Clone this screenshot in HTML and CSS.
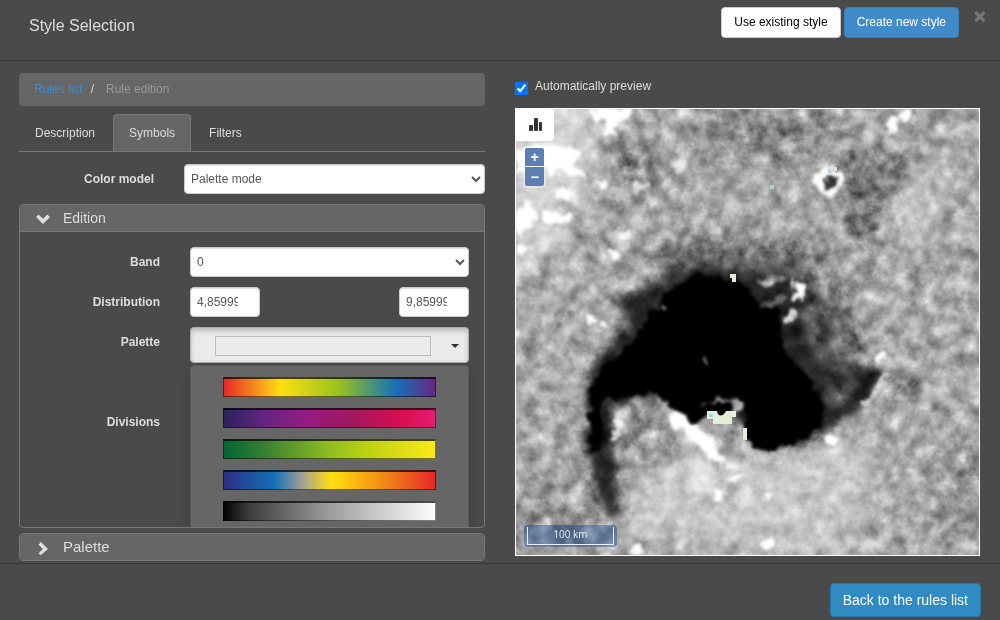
FILE: index.html
```html
<!DOCTYPE html>
<html lang="en">
<head>
<meta charset="utf-8">
<title>Style Selection</title>
<link rel="stylesheet" href="styles.css">
</head>
<body>
<div class="dialog">
  <header class="dialog-header">
    <h1 class="dialog-title">Style Selection</h1>
    <div class="header-actions">
      <button type="button" class="btn btn-light">Use existing style</button>
      <button type="button" class="btn btn-primary">Create new style</button>
    </div>
    <button type="button" class="close" aria-label="Close">×</button>
  </header>

  <main class="dialog-body">
    <section class="editor">
      <nav class="breadcrumb">
        <a href="#rules">Rules list</a><span class="separator">/</span><span class="current">Rule edition</span>
      </nav>
      <div class="tabs">
        <a href="#description" class="tab">Description</a>
        <a href="#symbols" class="tab tab-active">Symbols</a>
        <a href="#filters" class="tab">Filters</a>
      </div>
      <div class="form-row model-row">
        <label for="model">Color model</label>
        <select id="model" class="control"><option>Palette mode</option></select>
      </div>

      <section class="panel panel-open">
        <button type="button" class="panel-heading">
          <svg class="chevron" viewBox="0 0 16 16"><path d="M1 7 3.500 4.500 8 8.700 12.500 4.500 15 7 8 14z"/></svg>
          <span>Edition</span>
        </button>
        <div class="panel-body">
          <div class="form-row">
            <label for="band">Band</label>
            <select id="band" class="control"><option>0</option></select>
          </div>
          <div class="form-row">
            <label for="min">Distribution</label>
            <div class="range">
              <input id="min" class="control number" value="4,8599999">
              <input class="control number" aria-label="Distribution maximum" value="9,8599999">
            </div>
          </div>
          <div class="form-row palette-row">
            <label for="palette">Palette</label>
            <div class="dropdown">
              <button type="button" id="palette" class="dropdown-toggle">
                <span class="swatch swatch-empty"></span><span class="caret"></span>
              </button>
              <div class="dropdown-menu">
                <button type="button" class="swatch rainbow" aria-label="Rainbow"></button>
                <button type="button" class="swatch magenta" aria-label="Magenta"></button>
                <button type="button" class="swatch green" aria-label="Green to yellow"></button>
                <button type="button" class="swatch heat" aria-label="Blue to red"></button>
                <button type="button" class="swatch gray" aria-label="Gray"></button>
              </div>
            </div>
          </div>
          <div class="form-row divisions-row"><span class="row-label">Divisions</span></div>
        </div>
      </section>

      <section class="panel">
        <button type="button" class="panel-heading heading-large">
          <svg class="chevron" viewBox="0 0 16 16"><path d="M3.500 5.500 6 3 13 10 6 16 3.500 14.500 7.800 10z"/></svg>
          <span>Palette</span>
        </button>
      </section>
    </section>

    <section class="preview">
      <label class="check"><input type="checkbox" checked><span>Automatically preview</span></label>
      <div class="map">
        <svg class="terrain" viewBox="516 109 463 446" preserveAspectRatio="xMidYMid slice" role="img" aria-label="Terrain preview">
          <defs>
            <filter id="grain" x="0" y="0" width="100%" height="100%" color-interpolation-filters="sRGB">
              <feTurbulence type="fractalNoise" baseFrequency="0.065" numOctaves="4" seed="21"/>
              <feColorMatrix values="0.700 0.500 0 0 -0.080  0.700 0.500 0 0 -0.080  0.700 0.500 0 0 -0.080  0 0 0 0 1"/>
            </filter>
            <filter id="rough" x="-20%" y="-20%" width="140%" height="140%" color-interpolation-filters="sRGB">
              <feTurbulence type="fractalNoise" baseFrequency="0.09" numOctaves="3" seed="3" result="n"/>
              <feDisplacementMap in="SourceGraphic" in2="n" scale="14" xChannelSelector="R" yChannelSelector="G"/>
              <feGaussianBlur stdDeviation="1.500"/>
            </filter>
            <filter id="soft" x="-30%" y="-30%" width="160%" height="160%"><feGaussianBlur stdDeviation="12"/></filter>
            <filter id="mid" x="-30%" y="-30%" width="160%" height="160%" color-interpolation-filters="sRGB">
              <feTurbulence type="fractalNoise" baseFrequency="0.070" numOctaves="3" seed="5" result="n"/>
              <feDisplacementMap in="SourceGraphic" in2="n" scale="14" xChannelSelector="R" yChannelSelector="G"/>
              <feGaussianBlur stdDeviation="5"/>
            </filter>
          </defs>
          <rect x="516" y="109" width="463" height="446" fill="#a6a6a6"/>
          <g filter="url(#soft)">
            <path d="M500 90H600L590 170 560 250 500 280z" fill="#d2d2d2"/>
            <path d="M610 150 660 150 655 185 620 190z" fill="#7a7a7a"/>
            <path d="M690 110H860L810 160 700 155z" fill="#858585"/>
            <path d="M835 150 915 155 890 250 850 240z" fill="#707070"/>
            <path d="M890 190 960 160 920 240 885 235z" fill="#c2c2c2"/>
            <path d="M665 240 810 245 850 310 868 370 760 330 650 290z" fill="#606060"/>
            <path d="M510 480 580 470 600 555H510z" fill="#979797"/>
            <path d="M620 540 650 460 740 455 880 440 850 555z" fill="#c6c6c6"/>
            <path d="M940 440H985V540H930z" fill="#929292"/>
          </g>
          <g filter="url(#mid)">
            <path d="M614 298 640 290 672 276 700 266 790 276 815 310 826 350 888 374 862 410 800 447 770 450 740 420 650 405 612 405 620 515 604 520 585 450 588 375 606 345 632 325z" fill="#222"/>
            <path d="M800 300 830 305 845 350 858 372 840 375 810 355z" fill="#555"/>
            <path d="M830 382 856 386 840 408 826 405z" fill="#666"/>
            <path d="M885 399 924 374 914 389z" fill="#333"/>
            <path d="M622 402 650 397 690 440 660 465 622 465z" fill="#929292"/>
            <path d="M703 490 730 460 702 515z" fill="#505050"/>
            <path d="M650 389 676 400 725 462 700 462 668 425z" fill="#c0c0c0"/>
            <path d="M690 455 722 470 712 500 690 490z" fill="#ddd"/>
          </g>
          <g filter="url(#rough)">
            <path d="M665 293 695 274 742 280 762 307 780 307 785 353 808 375 824 408 823 426 792 445 766 452 744 440 744 402 720 398 696 425 650 391 603 400 600 455 590 455 589 388 605 365 625 349 650 317z" fill="#000"/>
            <path d="M669 412 680 414 715 439 724 462 712 461 696 444 672 422z" fill="#fff"/>
            <path d="M610 441 617 413 625 414 617 443z" fill="#ddd"/>
            <path d="M700 404 740 397 743 410 728 410z" fill="#a0a0a0"/>
            <path d="M704 403H730V412H705z" fill="#000"/>
            <path d="M756 281 780 274 788 277 765 288z" fill="#848484"/>
            <path d="M770 298 788 294 780 304 760 308z" fill="#777"/>
            <path d="M788 284 794 278 796 283 793 287z" fill="#ddd"/>
            <path d="M797 285 806 287 797 303 793 302z" fill="#fff"/>
            <path d="M792 308 797 314 793 325 785 323z" fill="#ddd"/>
            <path d="M728 477 746 472 736 482 727 485z" fill="#fff"/>
            <path d="M716 488 728 492 720 502 712 500z" fill="#fff"/>
            <path d="M862 406 886 370 890 373 873 402z" fill="#bdbdbd"/>
            <path d="M590 108H632L629 122 619 120 616 136 602 134 608 124 596 120z" fill="#fff"/>
            <path d="M516 150 550 143 560 148 580 149 583 158 574 164 586 178 567 170 552 175 540 164 516 176z" fill="#fff"/>
            <path d="M555 186 571 190 568 202 558 198z" fill="#fff"/>
            <path d="M524 198 533 202 536 218 516 239 516 223z" fill="#fff"/>
            <path d="M543 210 568 212 566 225 542 224 540 240z" fill="#fff"/>
            <path d="M516 245 532 246 522 255H516z" fill="#fff"/>
            <path d="M901 110 912 110 908 119 898 119z" fill="#fff"/>
            <path d="M888 119 898 117 895 134 886 132z" fill="#fff"/>
            <path d="M813 179 820 168 834 165 845 179 839 194 828 198 818 190z" fill="#fff"/>
            <path d="M824 178 838 176 835 188 824 188z" fill="#333"/>
            <path d="M921 196 929 185 926 197z" fill="#fff"/>
            <path d="M893 226 908 205 912 208 902 222z" fill="#ddd"/>
            <circle cx="832" cy="441" r="6" fill="#fff"/><circle cx="616" cy="254" r="5" fill="#fff"/>
            <circle cx="590" cy="320" r="5" fill="#fff"/><circle cx="880" cy="358" r="4" fill="#fff"/>
            <circle cx="766" cy="545" r="6" fill="#fff"/><circle cx="705" cy="362" r="3" fill="#666"/>
            <circle cx="662" cy="308" r="4" fill="#ddd"/><circle cx="606" cy="325" r="4" fill="#fff"/>
            <circle cx="600" cy="184" r="4" fill="#fff"/><circle cx="639" cy="188" r="6" fill="#ddd"/>
            <circle cx="680" cy="166" r="5" fill="#ddd"/><circle cx="646" cy="182" r="4" fill="#ddd"/>
            <circle cx="625" cy="235" r="5" fill="#eee"/><circle cx="637" cy="550" r="5" fill="#fff"/>
            <circle cx="704" cy="480" r="5" fill="#eee"/><circle cx="766" cy="495" r="4" fill="#fff"/>
          </g>
          <rect class="grain" x="516" y="109" width="463" height="446" filter="url(#grain)"/>
          <g fill="#e5eed8">
            <path d="M707 411H736V417H732V424H713V419H707z"/><path d="M743 428H747V440H743z"/>
            <path d="M730 274H736V282H732V278H730z"/>
          </g>
          <path d="M717 411C718 417 723 417 726 411z" fill="#000"/>
          <path d="M827 167H837V171H833V174H828z" fill="#d9e3df"/>
          <path d="M709 414H713V417H709zM770 187H774V189H770zM829 170H831V173H829z" fill="#a6d5dc"/>
          <path d="M770 185H774V187H770z" fill="#acd5a9"/>
        </svg>
        <div class="map-tools">
          <button type="button" class="chart-button" aria-label="Histogram">
            <svg viewBox="0 0 14 14"><rect x="0" y="7" width="4" height="6" rx="1"/><rect x="5" y="0" width="4" height="13" rx="1"/><rect x="10" y="4" width="3" height="9" rx="1"/></svg>
          </button>
          <div class="zoom">
            <button type="button" aria-label="Zoom in">+</button>
            <button type="button" aria-label="Zoom out">−</button>
          </div>
        </div>
        <div class="scale"><div class="scale-line">100 km</div></div>
      </div>
    </section>
  </main>

  <footer class="dialog-footer">
    <button type="button" class="btn btn-back">Back to the rules list</button>
  </footer>
</div>
</body>
</html>
```
FILE: styles.css
```css
* { box-sizing: border-box; }
body {
  margin: 0;
  background: #4a4a4a;
  color: #ddd;
  font: 12px/18px "Liberation Sans", Arial, sans-serif;
}
button, input, select { font: inherit; margin: 0; }
a { text-decoration: none; }
.dialog { min-height: 100vh; display: flex; flex-direction: column; }
.dialog-header {
  display: flex;
  align-items: flex-start;
  height: 61px;
  padding: 7px 13px 0 29px;
  border-bottom: 1px solid #373737;
}
.dialog-title { margin: 8px auto 0 0; font-size: 16px; line-height: 22px; font-weight: 400; }
.header-actions { display: flex; gap: 3px; }
.btn { border: 1px solid; border-radius: 4px; padding: 4px 12px 5px; height: 31px; cursor: pointer; }
.btn-light { background: #fff; border-color: #ccc; color: #000; }
.btn-primary { background: #428bca; border-color: #357ebd; color: #fff; }
.btn-back { background: #2f8bc1; border-color: #2478ab; color: #fff; height: 34px; font-size: 14px; }
.close {
  margin-left: 14px;
  padding: 0;
  width: 14px;
  border: 0;
  background: none;
  color: #777;
  font-size: 21px;
  line-height: 18px;
  font-weight: 700;
  text-shadow: 0 1px 0 #777;
}
.dialog-body {
  flex: 1;
  display: grid;
  grid-template-columns: 466fr 465fr;
  gap: 30px;
  padding: 12px 20px 0 19px;
}
.editor { display: flex; flex-direction: column; min-width: 0; padding-bottom: 2px; }
.breadcrumb { display: flex; padding: 7px 15px 8px; background: #666; border-radius: 4px; }
.breadcrumb a { color: #428bca; }
.separator { padding: 0 12px 0 8px; }
.current { color: #999; }
.tabs { display: flex; gap: 2px; margin-top: 8px; border-bottom: 1px solid #777; }
.tab { padding: 9px 15px; border: 1px solid transparent; border-bottom: 0; border-radius: 4px 4px 0 0; color: #ddd; }
.tab-active { background: #666; border-color: #777; }
.form-row { display: grid; grid-template-columns: 140px 1fr; column-gap: 30px; align-items: start; }
.form-row label, .row-label { padding-top: 6px; text-align: right; font-weight: 700; }
.model-row { margin: 12px 0 10px; grid-template-columns: 135px 1fr; }
.control {
  width: 100%;
  height: 30px;
  padding: 5px 6px;
  border: 1px solid #ccc;
  border-radius: 4px;
  background: #fff;
  color: #555;
  box-shadow: inset 0 1px 1px #ddd;
}
select.control { padding: 5px 2px; }
.range { display: flex; justify-content: space-between; }
.number { width: 70px; padding-right: 21px; }
.panel { border: 1px solid #777; border-radius: 4px; overflow: hidden; }
.panel-open { flex: 1; display: flex; flex-direction: column; margin-bottom: 5px; }
.panel-heading {
  display: flex;
  align-items: center;
  gap: 12px;
  width: 100%;
  height: 26px;
  padding: 0 15px;
  border: 0;
  background: #666;
  color: #ddd;
  font-size: 14px;
  text-align: left;
}
.heading-large { font-size: 15px; }
.chevron { width: 16px; height: 16px; fill: #ddd; }
.panel-open .panel-heading { height: 27px; border-bottom: 1px solid #777; }
.panel-body { flex: 1; display: flex; flex-direction: column; gap: 10px; padding: 15px; }
.panel-body .form-row { grid-template-columns: 125px 1fr; }
.dropdown { position: relative; }
.dropdown-toggle {
  display: flex;
  align-items: center;
  width: 100%;
  height: 36px;
  padding: 1px 9px 0 24px;
  border: 1px solid #adadad;
  border-radius: 4px;
  background: #ebebeb;
  box-shadow: inset 0 3px 5px #bbb;
}
.swatch { display: block; height: 20px; border: 1px solid rgba(0, 0, 0, .5); border-top: 2px solid rgba(0, 0, 0, .7); padding: 0; background-origin: border-box; }
.swatch-empty { flex: 1; margin-right: 20px; border: 1px solid #bbb; }
.caret { border: 4px solid transparent; border-top-color: #333; border-bottom: 0; }
.dropdown-menu {
  position: absolute;
  z-index: 2;
  top: 38px;
  left: 0;
  right: 0;
  display: flex;
  flex-direction: column;
  gap: 11px;
  padding: 11px 32px;
  border: 1px solid #595959;
  border-radius: 4px;
  background: #666;
  box-shadow: 0 6px 12px rgba(0, 0, 0, .2);
}
.rainbow { background-image: linear-gradient(90deg, #e6252a, #ffdf10 27%, #95c11f 55%, #1471b8 81%, #672483); }
.magenta { background-image: linear-gradient(90deg, #29235c, #662483 20%, #951b81 39%, #a3195b 62%, #d90e50 85%, #e71d73); }
.green { background-image: linear-gradient(90deg, #006633, #3a8033 20%, #95c11f 52%, #b9cf12 66%, #fcea1c); }
.heat { background-image: linear-gradient(90deg, #2d2e83, #1471b8 24%, #a0a094 37%, #ffdf10 51%, #f08218 78%, #e6252a); }
.gray { background-image: linear-gradient(90deg, #000, #3c3c3b 12%, #9d9d9c 50%, #fff); }
.divisions-row { margin-top: 34px; }
.preview { display: flex; flex-direction: column; min-width: 0; padding-bottom: 7px; }
.check { display: flex; align-items: flex-start; gap: 7px; height: 35px; padding-top: 4px; }
.check input { width: 13px; height: 13px; margin-top: 5px; }
.map { position: relative; flex: 1; border: 1px solid #fff; overflow: hidden; }
.terrain { position: absolute; inset: 0; width: 100%; height: 100%; }
.grain { mix-blend-mode: overlay; }
.map-tools { position: absolute; top: 0; left: 0; }
.chart-button { display: block; width: 38px; height: 32px; padding: 0 0 0 13px; border: 0; border-radius: 0 4px 4px 0; background: #fff; }
.chart-button svg { display: block; width: 14px; height: 14px; fill: #333; }
.zoom {
  display: grid;
  gap: 1px;
  margin: 5px 7px;
  width: 23px;
  padding: 2px;
  border-radius: 4px;
  background: rgba(255, 255, 255, .4);
}
.zoom button { height: 18px; padding: 0; border: 0; border-radius: 2px 2px 0 0; background: #5c80b3; color: #fff; font-size: 14px; line-height: 16px; font-weight: 700; }
.zoom button + button { height: 19px; border-radius: 0 0 2px 2px; }
.scale { position: absolute; left: 8px; bottom: 8px; padding: 2px 3px; border-radius: 4px; background: rgba(0, 60, 136, .4); }
.scale-line {
  width: 87px;
  height: 18px;
  border: 1px solid #eee;
  border-top: 0;
  color: #eee;
  font: 10px/14px "Open Sans", "Noto Sans", sans-serif;
  text-align: center;
}
.dialog-footer { display: flex; justify-content: flex-end; padding: 19px 19px 3px; border-top: 1px solid #373737; }
```
